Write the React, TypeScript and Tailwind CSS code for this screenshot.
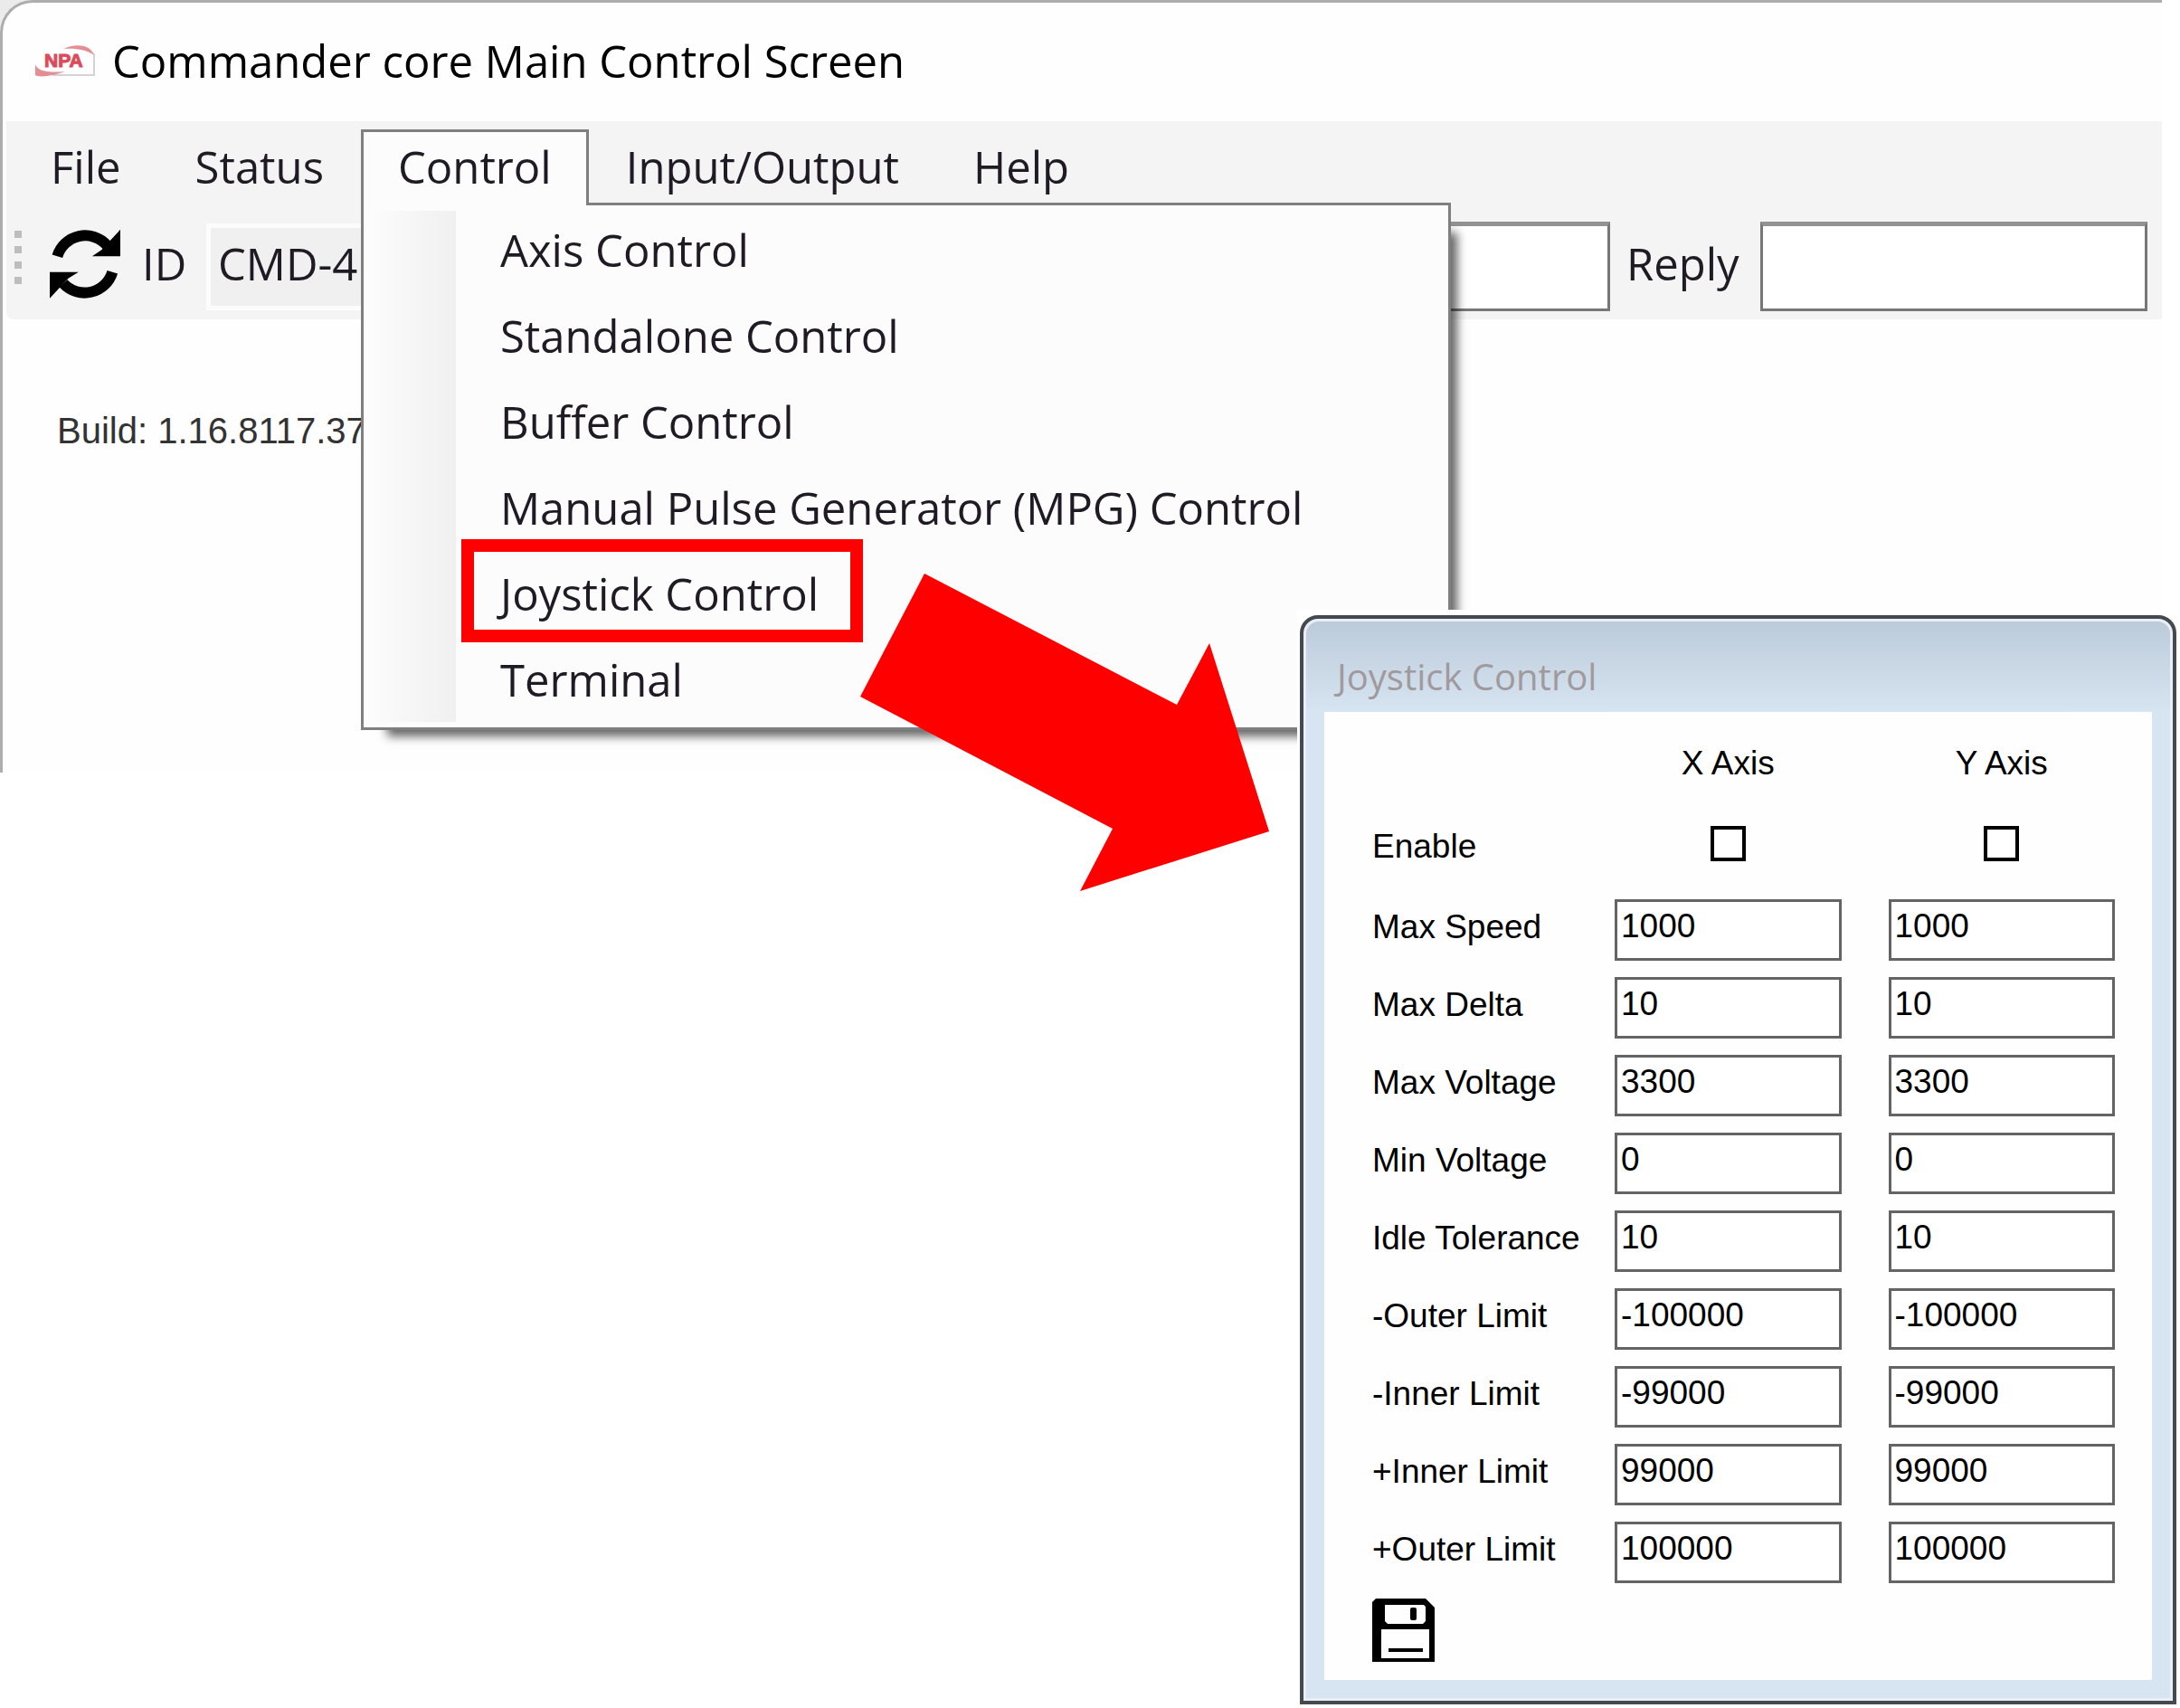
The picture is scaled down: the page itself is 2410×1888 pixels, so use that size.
import { useState } from "react";

const menuItems = [
  "Axis Control",
  "Standalone Control",
  "Buffer Control",
  "Manual Pulse Generator (MPG) Control",
  "Joystick Control",
  "Terminal",
];

const rows = [
  { label: "Max Speed", value: "1000" },
  { label: "Max Delta", value: "10" },
  { label: "Max Voltage", value: "3300" },
  { label: "Min Voltage", value: "0" },
  { label: "Idle Tolerance", value: "10" },
  { label: "-Outer Limit", value: "-100000" },
  { label: "-Inner Limit", value: "-99000" },
  { label: "+Inner Limit", value: "99000" },
  { label: "+Outer Limit", value: "100000" },
];

const Logo = () => (
  <svg className="h-9 w-[68px] shrink-0" viewBox="0 0 68 36" aria-hidden="true">
    <path d="M66 10V34H20" fill="none" stroke="#d3d3d6" strokeWidth="2" />
    <path d="M32 5C44 -1 62 -1 66 12C58 6 46 4 32 5Z" fill="#e58d95" />
    <path d="M1 22C3 29 14 32 34 30C20 35 6 37 1 34Z" fill="#e58d95" />
    <text x="11" y="25" fill="#dd4a5a" stroke="#dd4a5a" strokeWidth="1" fontSize="21" fontWeight="700" fontFamily="Liberation Sans, sans-serif">NPA</text>
  </svg>
);

const RefreshIcon = () => (
  <svg className="size-[78px]" viewBox="165 43 233 232" aria-hidden="true">
    <path d="M190 133A96 96 0 0 1 354 97" fill="none" stroke="#000" strokeWidth="36" />
    <path d="M398 45V133H305L336 112Z" />
    <path d="M372 185A96 96 0 0 1 210 223" fill="none" stroke="#000" strokeWidth="36" />
    <path d="M165 272V185H260L226 206Z" />
  </svg>
);

const SaveIcon = () => (
  <svg className="h-[70px] w-[69px]" viewBox="0 0 69 70" aria-hidden="true">
    <path d="M4 0H59L69 10V70H0V4Z" />
    <path d="M14 7H57L59 9V25L56 28H17L14 25Z" fill="#fefefe" />
    <rect x="42" y="10" width="7" height="14" rx="2" />
    <path d="M10 34H63V66H10Z" fill="#fefefe" />
    <path d="M18 55H56V59H18Z" />
  </svg>
);

const ControlMenu = () => (
  <div className="absolute -left-[3px] top-[78px] z-10 w-[1205px]">
    {/* drop shadow, starts a little below and right of the menu */}
    <div className="absolute bottom-0 left-7 right-0 top-8 shadow-[4px_4px_10px_3px_rgba(0,0,0,0.6)]" />
    <div className="relative border-[3px] border-[#7f7f7f] bg-[#fcfcfc] pb-1.5 pt-px">
      <div className="absolute inset-y-1.5 left-2 w-[94px] bg-linear-to-r from-[#fcfcfc] to-[#f0f0f0]" />
      <ul className="relative">
        {menuItems.map((item) => (
          <li key={item} className="relative h-[95px] pl-[151px]">
            <button className="flex h-full items-center whitespace-nowrap">{item}</button>
            {item === "Joystick Control" && (
              <div className="pointer-events-none absolute -top-3 left-[108px] h-[114px] w-[444px] border-[14px] border-[#ff0000]" />
            )}
          </li>
        ))}
      </ul>
    </div>
  </div>
);

const MainWindow = () => {
  const [command, setCommand] = useState("");
  const tab = "h-[81px] border-[3px] border-b-0 border-transparent px-[38px] pb-[3px]";

  return (
    <div className="mr-5 bg-[#ebebeb]">
      <div className="h-[854px] rounded-tl-[36px] border-l-[3px] border-t-[3px] border-[#adadad] bg-[#fefefe] pl-1 text-[49px] leading-[66px] text-[#1f1a24]">
        <header className="flex h-[131px] items-center gap-[18px] pb-1 pl-[31px]">
          <Logo />
          <h1 className="text-black">Commander core Main Control Screen</h1>
        </header>

        <nav className="flex bg-[#f4f4f4] pl-2 pt-[9px]">
          <button className={tab}>File</button>
          <button className={tab}>Status</button>
          <div className="relative h-[81px] border-[3px] border-b-0 border-[#7f7f7f] bg-[#fcfcfc]">
            <button className="h-full px-[38px] pb-[3px]">Control</button>
            <ControlMenu />
            {/* the open tab hides this part of the menu's top border */}
            <div className="absolute inset-x-0 -bottom-[3px] z-10 h-[3px] bg-[#fcfcfc]" />
          </div>
          <button className={tab}>Input/Output</button>
          <button className={tab}>Help</button>
        </nav>

        <div className="flex h-[129px] items-center rounded-bl-lg bg-[#f4f4f4] pl-[9px] pr-4 pt-3">
          <div className="flex flex-col gap-[9px] pb-5">
            <span className="size-2 bg-[#bdbdbd]" />
            <span className="size-2 bg-[#bdbdbd]" />
            <span className="size-2 bg-[#bdbdbd]" />
            <span className="size-2 bg-[#bdbdbd]" />
          </div>
          <button className="ml-[31px] mb-1.5" aria-label="Refresh">
            <RefreshIcon />
          </button>
          <label htmlFor="device" className="ml-6 mb-2 w-[71px]">ID</label>
          <select id="device" className="h-[96px] w-[520px] appearance-none border-[5px] border-[#fcfcfc] bg-[#f0f0f0] px-2 pb-2">
            <option>CMD-4</option>
          </select>
          <input
            aria-label="Command"
            value={command}
            onChange={(e) => setCommand(e.target.value)}
            className="ml-6 h-[99px] min-w-0 flex-1 border-[3px] border-t-[5px] border-[#777777] border-t-[#929292] bg-white px-3"
          />
          <label htmlFor="reply" className="mb-2 w-[166px] pl-[18px]">Reply</label>
          <input id="reply" readOnly className="h-[99px] w-[428px] border-[3px] border-t-[5px] border-[#777777] border-t-[#929292] bg-white px-3" />
        </div>

        <p className="pl-14 pt-[100px] font-['Liberation_Sans',sans-serif] text-[40px] leading-[46px] text-[#333]">
          Build: 1.16.8117.37
        </p>
      </div>
    </div>
  );
};

const CheckBox = ({ label }: { label: string }) => (
  <div className="flex justify-center pt-2">
    <input type="checkbox" aria-label={label} className="size-[39px] appearance-none border-4 border-black bg-white" />
  </div>
);

const field =
  "h-[68px] w-full border-[3px] border-[#646464] bg-white pb-2 pl-1 pr-1";

const JoystickDialog = () => (
  <div className="absolute left-[1434px] top-[674px] z-20 w-[976px] bg-white pb-1 pl-[3px] pr-1 pt-1.5">
    <section className="overflow-hidden rounded-t-[20px] border-4 border-[#464a4e] bg-[#e8eff7] p-[3px]">
      <div className="rounded-t-[14px] bg-[#d7e4f2] bg-linear-to-b from-[#bccbda] to-[#d7e4f2] bg-size-[100%_100px] bg-no-repeat px-5 pb-5">
        <h2 className="h-[100px] pl-[14px] pt-[34px] text-[40px] leading-[54px] text-[#a09a9c]">Joystick Control</h2>
        <form className="bg-[#fefefe] pb-5 pl-[53px] pr-[41px] pt-[26px] font-['Liberation_Sans',sans-serif] text-[37px] leading-[62px] text-black">
          <div className="grid grid-cols-[216px_1fr_1fr] gap-x-[52px] gap-y-[18px]">
            <span />
            <span className="h-[74px] text-center">X Axis</span>
            <span className="h-[74px] text-center">Y Axis</span>
            <span className="h-[71px]">Enable</span>
            <CheckBox label="Enable X Axis" />
            <CheckBox label="Enable Y Axis" />
            {rows.map((row) => (
              <div key={row.label} className="contents">
                <label htmlFor={row.label} className="whitespace-nowrap">{row.label}</label>
                <input id={row.label} defaultValue={row.value} className={field} />
                <input aria-label={row.label + " Y"} defaultValue={row.value} className={field} />
              </div>
            ))}
          </div>
          <button type="button" aria-label="Save" className="mt-[17px] block">
            <SaveIcon />
          </button>
        </form>
      </div>
    </section>
  </div>
);

export default function App() {
  return (
    <div className="relative min-h-[1888px] overflow-hidden bg-white font-['Open_Sans','Noto_Sans',sans-serif]">
      <MainWindow />
      <JoystickDialog />
      <svg className="absolute left-[951px] top-[634px] z-30 h-[351px] w-[452px]" viewBox="951 634 452 351" aria-hidden="true">
        <path d="M1022 634L1301 779L1337 711L1403 919L1194 985L1230 916L951 770Z" fill="#ff0000" />
      </svg>
    </div>
  );
}
